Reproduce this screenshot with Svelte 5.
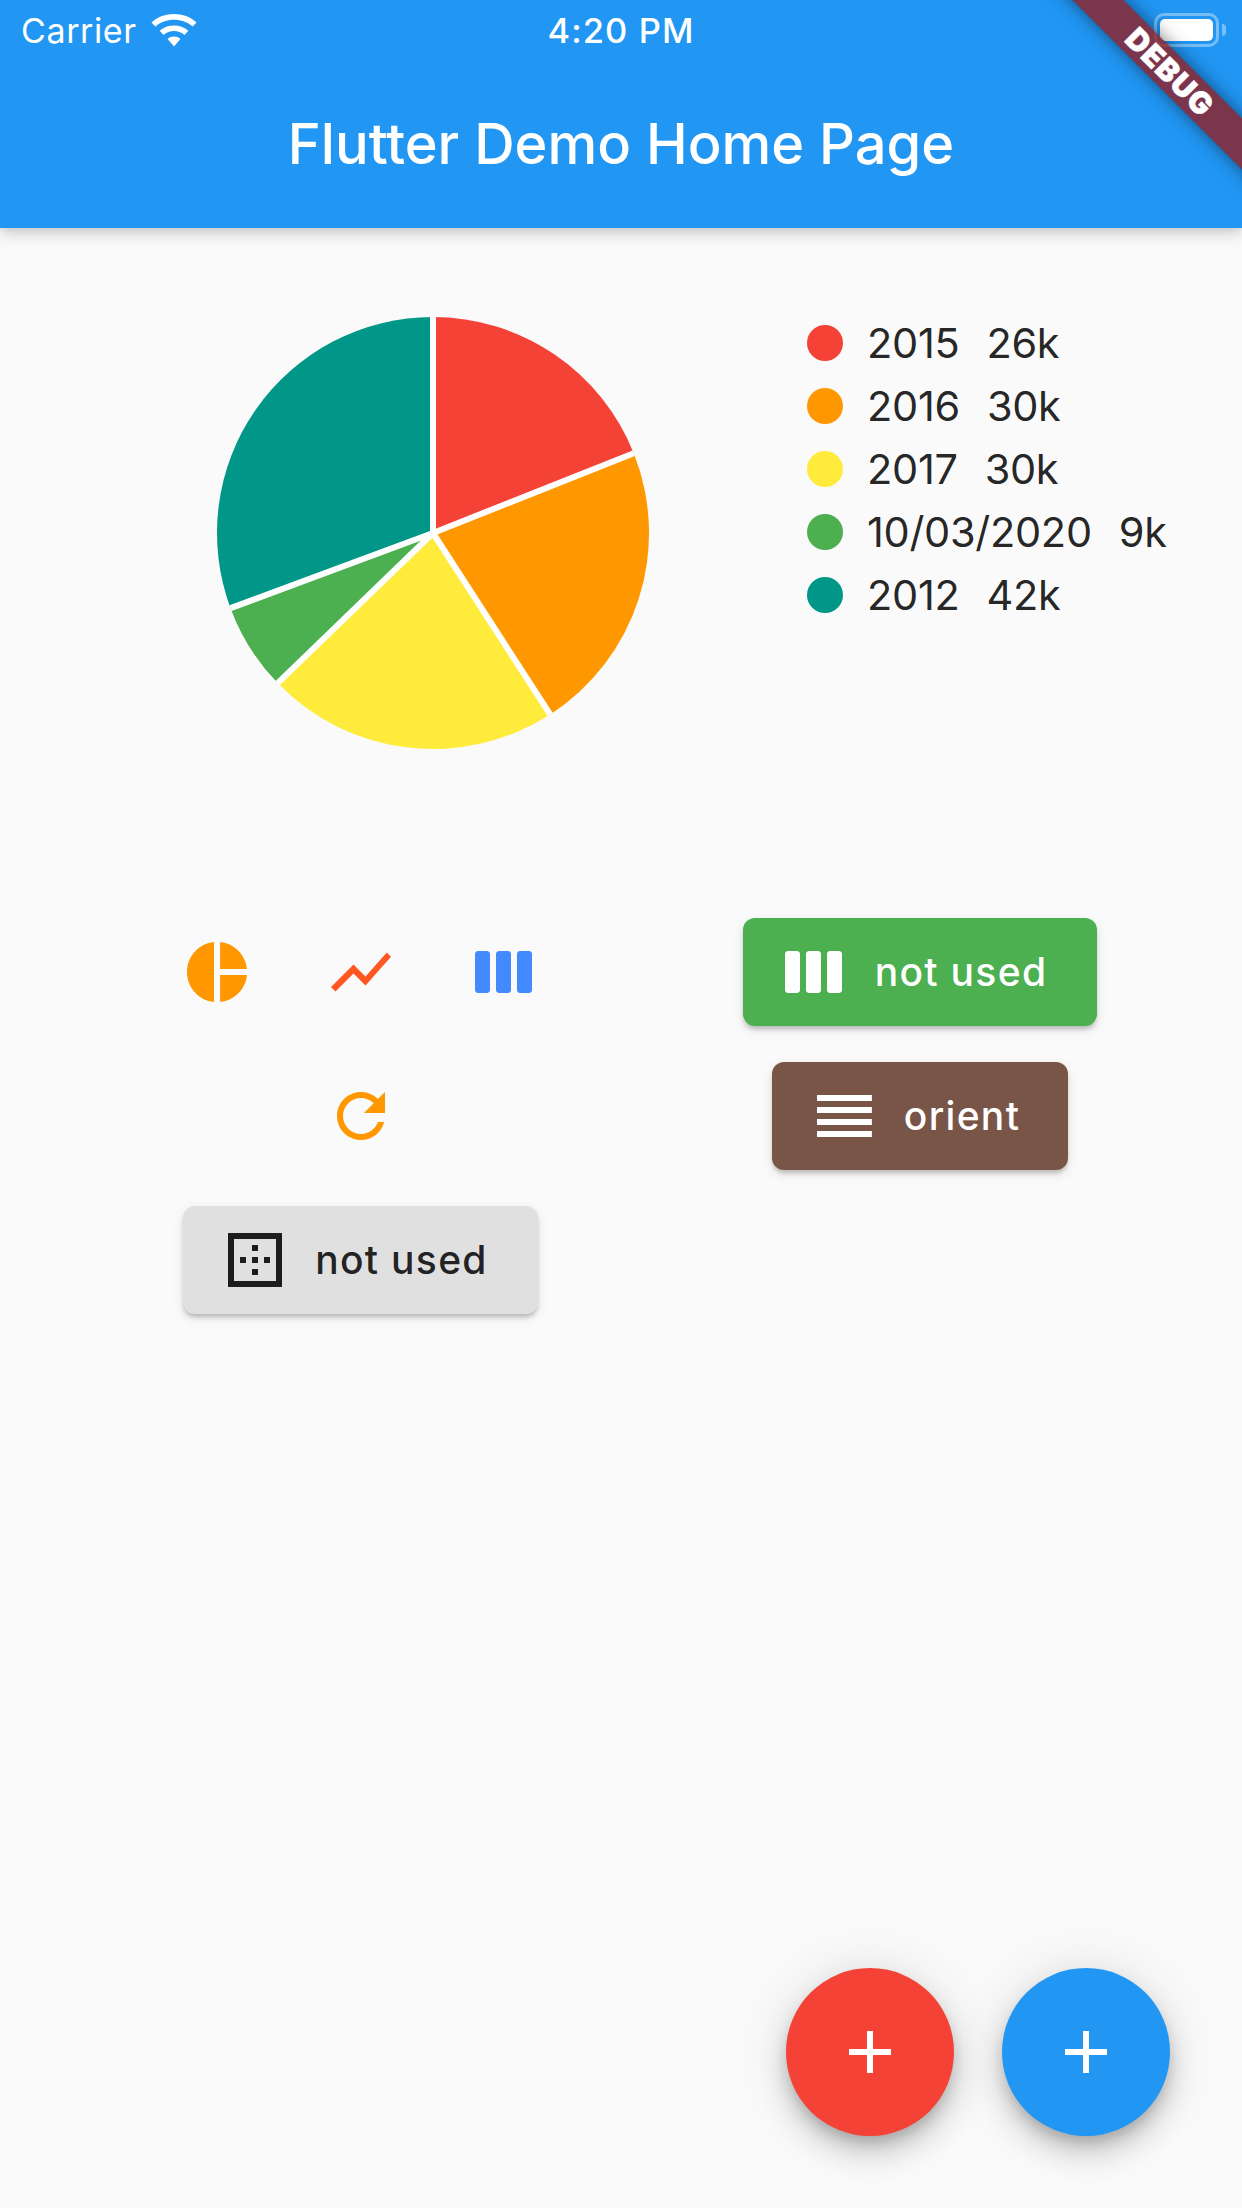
<script>
  const slices = [
    { label: "2015", value: 26, color: "#f44336" },
    { label: "2016", value: 30, color: "#ff9800" },
    { label: "2017", value: 30, color: "#ffeb3b" },
    { label: "10/03/2020", value: 9, color: "#4caf50" },
    { label: "2012", value: 42, color: "#009688" },
  ];

  const total = slices.reduce((sum, s) => sum + s.value, 0);
  const r = 216;
  const c = 216;

  function point(angle) {
    const a = (angle * Math.PI) / 180;
    return [c + r * Math.sin(a), c - r * Math.cos(a)];
  }

  let acc = 0;
  const arcs = slices.map((s) => {
    const from = (acc / total) * 360;
    acc += s.value;
    const to = (acc / total) * 360;
    const [x1, y1] = point(from);
    const [x2, y2] = point(to);
    const large = to - from > 180 ? 1 : 0;
    return {
      color: s.color,
      d: `M${c} ${c}L${x1} ${y1}A${r} ${r} 0 ${large} 1 ${x2} ${y2}Z`,
      x: x1,
      y: y1,
    };
  });
</script>

<div class="page">
  <header class="appbar">
    <div class="status">
      <div class="status-left">
        <span class="carrier">Carrier</span>
        <svg class="wifi" width="46" height="34" viewBox="0 0 46 34" aria-hidden="true">
          <path d="M0.5 9.5C12.5 -1.8 33.5 -1.8 45.5 9.5L41.6 13.6C31.8 4.6 14.2 4.6 4.4 13.6Z" fill="#fff" />
          <path d="M8.6 17.8C16.4 10.6 29.6 10.6 37.4 17.8L33.5 21.9C27.8 16.8 18.2 16.8 12.5 21.9Z" fill="#fff" />
          <path d="M16.6 26C20.2 22.8 25.8 22.8 29.4 26L23 33.4Z" fill="#fff" />
        </svg>
      </div>
      <span class="time">4:20 PM</span>
      <div class="battery">
        <div class="battery-shell"><div class="battery-fill"></div></div>
        <div class="battery-nub"></div>
      </div>
    </div>
    <div class="toolbar">
      <h1>Flutter Demo Home Page</h1>
    </div>
  </header>

  <section class="chart-row">
    <svg class="pie" width="432" height="432" viewBox="0 0 432 432" role="img" aria-label="Pie chart">
      {#each arcs as arc}
        <path d={arc.d} fill={arc.color} />
      {/each}
      {#each arcs as arc}
        <line x1={c} y1={c} x2={arc.x} y2={arc.y} stroke="#fff" stroke-width="6" />
      {/each}
    </svg>
    <ul class="legend">
      {#each slices as s}
        <li>
          <span class="dot" style="background: {s.color}"></span>
          <span class="legend-text">{s.label}</span>
          <span class="legend-text value">{s.value}k</span>
        </li>
      {/each}
    </ul>
  </section>

  <section class="controls">
    <div class="col-left">
      <div class="icon-row">
        <span class="icon-btn">
          <svg width="72" height="72" viewBox="0 0 24 24" fill="#ff9800"><path d="M11 2v20c-5.07-.5-9-4.79-9-10s3.93-9.5 9-10zm2.03 0v8.99H22c-.47-4.74-4.24-8.52-8.97-8.99zm0 11.01V22c4.74-.47 8.5-4.25 8.97-8.99h-8.97z" /></svg>
        </span>
        <span class="icon-btn">
          <svg width="72" height="72" viewBox="0 0 24 24" fill="#ff5722"><path d="M3.5 18.49l6-6.01 4 4L22 6.92l-1.41-1.41-7.09 7.97-4-4L2 16.99z" /></svg>
        </span>
        <span class="icon-btn">
          <svg width="72" height="72" viewBox="0 0 24 24" fill="#448aff"><path d="M6 5H3c-.55 0-1 .45-1 1v12c0 .55.45 1 1 1h3c.55 0 1-.45 1-1V6c0-.55-.45-1-1-1zm14 0h-3c-.55 0-1 .45-1 1v12c0 .55.45 1 1 1h3c.55 0 1-.45 1-1V6c0-.55-.45-1-1-1zm-7 0h-3c-.55 0-1 .45-1 1v12c0 .55.45 1 1 1h3c.55 0 1-.45 1-1V6c0-.55-.45-1-1-1z" /></svg>
        </span>
      </div>
      <div class="icon-row">
        <span class="icon-btn">
          <svg width="72" height="72" viewBox="0 0 24 24" fill="#ff9800"><path d="M17.65 6.35C16.2 4.9 14.21 4 12 4c-4.42 0-7.99 3.58-7.99 8s3.57 8 7.99 8c3.73 0 6.84-2.55 7.73-6h-2.08c-.82 2.33-3.04 4-5.65 4-3.31 0-6-2.69-6-6s2.69-6 6-6c1.66 0 3.14.69 4.22 1.78L13 11h7V4l-2.35 2.35z" /></svg>
        </span>
      </div>
      <button type="button" class="btn grey">
        <svg width="72" height="72" viewBox="0 0 24 24" fill="currentColor"><path d="M13 7h-2v2h2V7zm0 4h-2v2h2v-2zm4 0h-2v2h2v-2zM3 3v18h18V3H3zm16 16H5V5h14v14zm-6-4h-2v2h2v-2zm-4-4H7v2h2v-2z" /></svg>
        <span>not used</span>
      </button>
    </div>
    <div class="col-right">
      <button type="button" class="btn green">
        <svg width="72" height="72" viewBox="0 0 24 24" fill="currentColor"><path d="M6 5H3c-.55 0-1 .45-1 1v12c0 .55.45 1 1 1h3c.55 0 1-.45 1-1V6c0-.55-.45-1-1-1zm14 0h-3c-.55 0-1 .45-1 1v12c0 .55.45 1 1 1h3c.55 0 1-.45 1-1V6c0-.55-.45-1-1-1zm-7 0h-3c-.55 0-1 .45-1 1v12c0 .55.45 1 1 1h3c.55 0 1-.45 1-1V6c0-.55-.45-1-1-1z" /></svg>
        <span>not used</span>
      </button>
      <button type="button" class="btn brown">
        <svg width="72" height="72" viewBox="0 0 24 24" fill="currentColor"><path d="M3 15h18.3v-2H3v2zm0 4h18.3v-2H3v2zm0-8h18.3V9H3v2zm0-6v2h18.3V5H3z" /></svg>
        <span>orient</span>
      </button>
    </div>
  </section>

  <div class="fabs">
    <button type="button" class="fab red" aria-label="Add">
      <svg width="72" height="72" viewBox="0 0 24 24" fill="#fff"><path d="M19 13h-6v6h-2v-6H5v-2h6V5h2v6h6v2z" /></svg>
    </button>
    <button type="button" class="fab blue" aria-label="Add">
      <svg width="72" height="72" viewBox="0 0 24 24" fill="#fff"><path d="M19 13h-6v6h-2v-6H5v-2h6V5h2v6h6v2z" /></svg>
    </button>
  </div>

  <div class="banner"><span>DEBUG</span></div>
</div>

<style>
  :global(body) {
    margin: 0;
    background: #fafafa;
  }
  .page {
    position: relative;
    width: 1242px;
    height: 2208px;
    overflow: hidden;
    background: #fafafa;
    font-family: Inter, "Noto Sans", sans-serif;
  }
  .appbar {
    background: #2196f3;
    color: #fff;
    height: 228px;
    box-shadow: 0 6px 15px rgba(0, 0, 0, 0.16), 0 3px 6px rgba(0, 0, 0, 0.06);
  }
  .status {
    position: relative;
    height: 60px;
    display: flex;
    align-items: center;
    justify-content: space-between;
    padding: 0 16px 0 21px;
  }
  .status-left {
    display: flex;
    align-items: center;
    gap: 14px;
  }
  .carrier {
    font-size: 34px;
    letter-spacing: 0.6px;
  }
  .wifi {
    margin-top: -1px;
  }
  .time {
    position: absolute;
    left: 0;
    right: 0;
    text-align: center;
    font-size: 34.5px;
    font-weight: 500;
    letter-spacing: 1.1px;
  }
  .battery {
    display: flex;
    align-items: center;
    gap: 3px;
  }
  .battery-shell {
    width: 65px;
    height: 34px;
    box-sizing: border-box;
    border: 3px solid rgba(255, 255, 255, 0.38);
    border-radius: 10px;
    padding: 3px;
  }
  .battery-fill {
    width: 100%;
    height: 100%;
    background: #fff;
    border-radius: 5px;
  }
  .battery-nub {
    width: 4px;
    height: 12px;
    background: rgba(255, 255, 255, 0.4);
    border-radius: 0 4px 4px 0;
  }
  .toolbar {
    height: 168px;
    display: flex;
    align-items: center;
    justify-content: center;
  }
  h1 {
    margin: 0;
    font-size: 56px;
    font-weight: 500;
  }
  .chart-row {
    display: flex;
    align-items: flex-start;
    padding: 89px 0 0 217px;
    height: 672px;
    box-sizing: border-box;
  }
  .legend {
    list-style: none;
    margin: -6px 0 0 158px;
    padding: 0;
    color: rgba(0, 0, 0, 0.87);
  }
  .legend li {
    display: flex;
    align-items: center;
    height: 63px;
    font-size: 41.5px;
    letter-spacing: -0.3px;
  }
  .dot {
    width: 36px;
    height: 36px;
    border-radius: 50%;
    margin-right: 24px;
  }
  .value {
    margin-left: 27px;
  }
  .controls {
    display: grid;
    grid-template-columns: 355px 354px;
    column-gap: 205px;
    padding-left: 183px;
  }
  .col-left,
  .col-right {
    display: flex;
    flex-direction: column;
    align-items: center;
  }
  .col-right {
    padding-top: 18px;
    gap: 36px;
  }
  .icon-row {
    display: flex;
    justify-content: center;
  }
  .icon-btn {
    width: 144px;
    height: 144px;
    display: flex;
    align-items: center;
    justify-content: center;
  }
  .btn {
    display: flex;
    align-items: center;
    gap: 24px;
    height: 108px;
    padding: 0 50px 0 36px;
    border: 0;
    border-radius: 12px;
    font-family: inherit;
    font-size: 39px;
    font-weight: 500;
    letter-spacing: 1.3px;
    white-space: nowrap;
    box-shadow: 0 4px 4px -1px rgba(0, 0, 0, 0.2), 0 4px 12px rgba(0, 0, 0, 0.1);
  }
  .btn span {
    margin-top: -2px;
  }
  .grey {
    margin-top: 18px;
    background: #e0e0e0;
    color: rgba(0, 0, 0, 0.87);
  }
  .green {
    background: #4caf50;
    color: #fff;
  }
  .brown {
    background: #795548;
    color: #fff;
    padding-right: 48px;
  }
  .fabs {
    position: absolute;
    right: 72px;
    bottom: 72px;
    display: flex;
    gap: 48px;
  }
  .fab {
    width: 168px;
    height: 168px;
    padding: 0;
    border: 0;
    border-radius: 50%;
    display: flex;
    align-items: center;
    justify-content: center;
    box-shadow: 0 9px 15px -3px rgba(0, 0, 0, 0.2), 0 18px 30px 0 rgba(0, 0, 0, 0.14), 0 3px 54px 0 rgba(0, 0, 0, 0.12);
  }
  .red {
    background: #f44336;
  }
  .blue {
    background: #2196f3;
  }
  .banner {
    position: absolute;
    left: 970px;
    top: 54px;
    width: 400px;
    height: 36px;
    transform: rotate(45deg);
    background: linear-gradient(rgba(183, 28, 28, 0.63), rgba(183, 28, 28, 0.63)), rgba(0, 0, 0, 0.35);
    box-shadow: 0 0 18px rgba(0, 0, 0, 0.5);
    display: flex;
    align-items: center;
    justify-content: center;
    color: #fff;
    font-size: 30px;
    font-weight: 900;
    letter-spacing: 1.2px;
    line-height: 1;
    -webkit-text-stroke: 0.6px #fff;
  }
</style>
